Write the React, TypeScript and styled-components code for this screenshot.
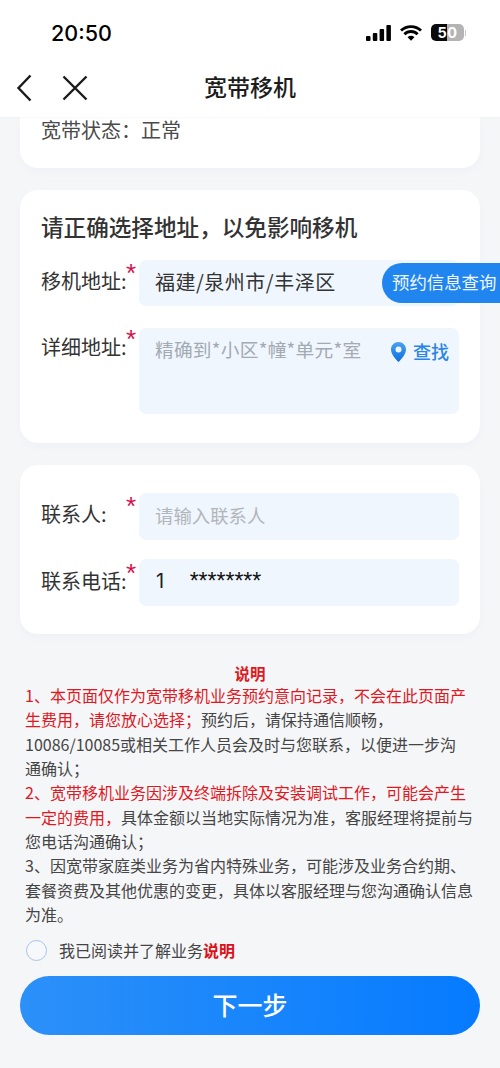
import React from "react";
import styled, { createGlobalStyle } from "styled-components";

const Global = createGlobalStyle`
  html, body { margin: 0; padding: 0; background: #f5f6f8; }
  body { font-family: "Noto Sans CJK SC", "Noto Sans", sans-serif; }
`;

const Page = styled.div`
  position: relative;
  width: 500px;
  height: 1068px;
  overflow: hidden;
  background: #f5f6f8;
  display: flex;
  flex-direction: column;
`;

const Header = styled.header`
  background: #fff;
  box-shadow: 0 1px 2px rgba(0, 0, 0, 0.03);
  position: relative;
  z-index: 1;
`;

const StatusBar = styled.div`
  height: 60px;
  padding: 5px 34px 0 51px;
  box-sizing: border-box;
  display: flex;
  align-items: center;
  justify-content: space-between;
`;

const Time = styled.span`
  font-family: Inter, "Liberation Sans", sans-serif;
  font-size: 21.5px;
  font-weight: 500;
  color: #000;
`;

const StatusIcons = styled.div`
  display: flex;
  align-items: center;
  gap: 9px;
`;

const Battery = styled.div`
  position: relative;
  width: 33px;
  height: 17px;
  border-radius: 5px;
  overflow: hidden;
  background: linear-gradient(90deg, #0a0a0a 50%, #b4b4b4 50%);
  display: flex;
  align-items: center;
  justify-content: center;
  color: #fff;
  font-family: Inter, "Liberation Sans", sans-serif;
  font-weight: 700;
  font-size: 14.5px;
  letter-spacing: 0.5px;
`;

const BatteryWrap = styled.div`
  display: flex;
  align-items: center;
  gap: 1px;
  &::after {
    content: "";
    width: 1px;
    height: 6px;
    background: #c8c8c8;
  }
`;

const Nav = styled.nav`
  height: 57px;
  position: relative;
  display: flex;
  align-items: center;
  justify-content: center;
`;

const NavIcons = styled.div`
  position: absolute;
  left: 15px;
  top: 13px;
  display: flex;
  align-items: center;
  gap: 28px;
`;

const NavTitle = styled.h1`
  margin: 0 0 5px;
  font-size: 23px;
  font-weight: 500;
  color: #1c1c1c;
`;

const Content = styled.main`
  padding: 0 20px;
  display: flex;
  flex-direction: column;
`;

const Card = styled.section`
  background: #fff;
  border-radius: 18px;
  box-shadow: 0 4px 10px rgba(30, 60, 110, 0.025);
  margin-top: 22px;
`;

const StatusCard = styled(Card)`
  margin-top: 0;
  height: 51px;
  border-radius: 0 0 18px 18px;
  padding: 0 21px;
  font-size: 20px;
  line-height: 25px;
  color: #4a4a4a;
  white-space: pre;
`;

const AddressCard = styled(Card)`
  padding: 22px 21px 29px 21px;
  height: 253px;
  box-sizing: border-box;
`;

const ContactCard = styled(Card)`
  padding: 28px 21px 28px 21px;
  height: 169px;
  box-sizing: border-box;
  display: flex;
  flex-direction: column;
  gap: 19px;
`;

const CardTitle = styled.h2`
  margin: 0 0 18px;
  font-size: 22.6px;
  line-height: 30px;
  font-weight: 500;
  color: #333;
  white-space: nowrap;
`;

const Row = styled.div<{ $gap?: number }>`
  display: flex;
  margin-bottom: ${(p) => p.$gap ?? 0}px;
`;

const Label = styled.label<{ $top: number }>`
  flex: 0 0 98px;
  min-width: 0;
  display: flex;
  justify-content: space-between;
  box-sizing: border-box;
  padding: ${(p) => p.$top}px 3px 0 0;
  font-size: 20px;
  line-height: 30px;
  color: #333;
  white-space: nowrap;
`;

const Star = styled.span`
  flex: none;
  font-family: "Liberation Sans", sans-serif;
  font-size: 26px;
  line-height: 22px;
  color: #d3104c;
  height: 16px;
  margin: -4px 0 0 -4px;
`;

const Field = styled.div<{ $h: number }>`
  flex: 1;
  min-width: 0;
  height: ${(p) => p.$h}px;
  background: #eff6fe;
  border-radius: 7px;
  padding: 0 10px 3px 16px;
  box-sizing: border-box;
  display: flex;
  align-items: center;
  justify-content: space-between;
  font-size: 20px;
  letter-spacing: 0.5px;
  color: #333;
  white-space: nowrap;
`;

const TallField = styled(Field)`
  align-items: flex-start;
  padding-top: 8px;
`;

const Placeholder = styled.span<{ $color: string }>`
  font-size: 18.4px;
  letter-spacing: 0;
  line-height: 28px;
  color: ${(p) => p.$color};
`;

const DetailPlaceholder = styled(Placeholder)`
  font-size: 18.7px;
  letter-spacing: 0.25px;
  margin-top: -1px;
`;

const FindAction = styled.span`
  display: flex;
  align-items: center;
  gap: 7px;
  margin-top: 1px;
  font-size: 18px;
  letter-spacing: 0;
  line-height: 28px;
  font-weight: 500;
  color: #2a85e6;
`;

const FindLabel = styled.span`
  margin-bottom: 2px;
`;

const PhoneDigit = styled.span`
  font-family: Inter, "Liberation Sans", sans-serif;
  font-size: 20px;
  color: #222;
  margin-left: 1px;
`;

const PhoneStars = styled.span`
  font-family: "Liberation Sans", sans-serif;
  font-size: 23px;
  letter-spacing: 0;
  color: #111;
  margin-left: 25px;
`;

const PhoneValue = styled.div`
  display: flex;
  align-items: center;
`;

const QueryButton = styled.button`
  position: absolute;
  top: 263px;
  right: 0;
  width: 118px;
  height: 40px;
  padding: 0 0 3px 10px;
  border: 0;
  border-radius: 20px 0 0 20px;
  background: #2085ee;
  color: #eef6ff;
  font-family: inherit;
  font-size: 17.4px;
  text-align: left;
  white-space: nowrap;
  z-index: 2;
`;

const NoticeTitle = styled.h3`
  margin: 27px 0 0;
  height: 22px;
  font-size: 15.5px;
  line-height: 24px;
  font-weight: 700;
  text-align: center;
  color: #dc1a22;
`;

const Notice = styled.div`
  margin-left: 5px;
  font-size: 16px;
  line-height: 24.35px;
  color: #454545;
  white-space: nowrap;
`;

const Line = styled.div``;

const Red = styled.span`
  color: #e0181f;
`;

const Agree = styled.div`
  margin: 13px 0 0 6px;
  height: 22px;
  display: flex;
  align-items: center;
  gap: 12px;
  font-size: 16px;
  color: #444;
`;

const Radio = styled.span`
  width: 21px;
  height: 21px;
  border-radius: 50%;
  border: 1.5px solid #a6c3e3;
  background: #f6f8fb;
  box-sizing: border-box;
`;

const AgreeLink = styled.b`
  font-weight: 700;
  color: #dc1018;
`;

const NextButton = styled.button`
  margin-top: 15px;
  height: 59px;
  padding: 0 0 4px;
  border: 0;
  border-radius: 30px;
  background: linear-gradient(90deg, #2c90f8, #067bff);
  color: #fff;
  font-family: inherit;
  font-size: 25px;
  font-weight: 500;
`;

export default function App() {
  return (
    <Page>
      <Global />
      <Header>
        <StatusBar>
          <Time>20:50</Time>
          <StatusIcons>
            <svg width="25" height="16" viewBox="0 0 25 16">
              <rect x="0" y="11" width="4.5" height="5" rx="1" fill="#000" />
              <rect x="6.8" y="8" width="4.5" height="8" rx="1" fill="#000" />
              <rect x="13.6" y="4" width="4.5" height="12" rx="1" fill="#000" />
              <rect x="20.4" y="0" width="4.5" height="16" rx="1" fill="#000" />
            </svg>
            <svg width="22" height="16" viewBox="0 0 22 16" fill="none">
              <path d="M1 5.6a14.4 14.4 0 0 1 20 0" stroke="#000" strokeWidth="2.8" />
              <path d="M4.4 9.2a9.4 9.4 0 0 1 13.2 0" stroke="#000" strokeWidth="2.8" />
              <path d="M7.6 12.2a4.8 4.8 0 0 1 6.8 0L11 15.8z" fill="#000" />
            </svg>
            <BatteryWrap>
              <Battery>50</Battery>
            </BatteryWrap>
          </StatusIcons>
        </StatusBar>
        <Nav>
          <NavIcons>
            <svg width="18" height="30" viewBox="0 0 18 30" fill="none">
              <path d="M15.5 2.5 3.5 15l12 12.5" stroke="#1a1a1a" strokeWidth="2.4" />
            </svg>
            <svg width="28" height="28" viewBox="0 0 28 28" fill="none">
              <path d="M2.5 2.5l23 23M25.5 2.5l-23 23" stroke="#1a1a1a" strokeWidth="2.4" />
            </svg>
          </NavIcons>
          <NavTitle>宽带移机</NavTitle>
        </Nav>
      </Header>

      <Content>
        <StatusCard>宽带状态：正常</StatusCard>

        <AddressCard>
          <CardTitle>请正确选择地址，以免影响移机</CardTitle>
          <Row $gap={22}>
            <Label $top={6}>
              移机地址:<Star>*</Star>
            </Label>
            <Field $h={46}>福建/泉州市/丰泽区</Field>
          </Row>
          <Row>
            <Label $top={4}>
              详细地址:<Star>*</Star>
            </Label>
            <TallField $h={86}>
              <DetailPlaceholder $color="#a3aab2">精确到*小区*幢*单元*室</DetailPlaceholder>
              <FindAction>
                <svg width="15" height="20" viewBox="0 0 15 20">
                  <defs>
                    <linearGradient id="pin" x1="0" y1="0" x2="0" y2="1">
                      <stop offset="0" stopColor="#4aa2f2" />
                      <stop offset="1" stopColor="#0b6fdc" />
                    </linearGradient>
                  </defs>
                  <path
                    fillRule="evenodd"
                    d="M7.5 0C3.4 0 0 3.3 0 7.4c0 4.6 4.6 9.7 7.5 12.6 2.9-2.9 7.5-8 7.5-12.6C15 3.3 11.6 0 7.5 0zm0 4.6a3 3 0 1 1 0 6 3 3 0 0 1 0-6z"
                    fill="url(#pin)"
                  />
                </svg>
                <FindLabel>查找</FindLabel>
              </FindAction>
            </TallField>
          </Row>
        </AddressCard>

        <ContactCard>
          <Row>
            <Label $top={6}>
              联系人:<Star>*</Star>
            </Label>
            <Field $h={47}>
              <Placeholder $color="#b2b5b9">请输入联系人</Placeholder>
            </Field>
          </Row>
          <Row>
            <Label $top={7}>
              联系电话:<Star>*</Star>
            </Label>
            <Field $h={47}>
              <PhoneValue>
                <PhoneDigit>1</PhoneDigit>
                <PhoneStars>********</PhoneStars>
              </PhoneValue>
            </Field>
          </Row>
        </ContactCard>

        <NoticeTitle>说明</NoticeTitle>
        <Notice>
          <Line>
            <Red>1、本页面仅作为宽带移机业务预约意向记录，不会在此页面产</Red>
          </Line>
          <Line>
            <Red>生费用，请您放心选择；</Red>预约后，请保持通信顺畅，
          </Line>
          <Line>10086/10085或相关工作人员会及时与您联系，以便进一步沟</Line>
          <Line>通确认；</Line>
          <Line>
            <Red>2、宽带移机业务因涉及终端拆除及安装调试工作，可能会产生</Red>
          </Line>
          <Line>
            <Red>一定的费用，</Red>具体金额以当地实际情况为准，客服经理将提前与
          </Line>
          <Line>您电话沟通确认；</Line>
          <Line>3、因宽带家庭类业务为省内特殊业务，可能涉及业务合约期、</Line>
          <Line>套餐资费及其他优惠的变更，具体以客服经理与您沟通确认信息</Line>
          <Line>为准。</Line>
        </Notice>

        <Agree>
          <Radio />
          <span>
            我已阅读并了解业务<AgreeLink>说明</AgreeLink>
          </span>
        </Agree>

        <NextButton>下一步</NextButton>
      </Content>

      <QueryButton>预约信息查询</QueryButton>
    </Page>
  );
}
